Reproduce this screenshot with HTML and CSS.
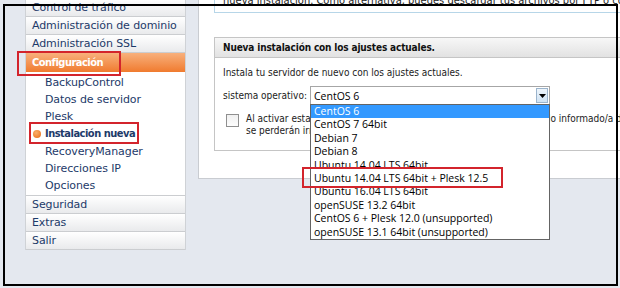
FILE: index.html
```html
<!DOCTYPE html>
<html lang="es">
<head>
<meta charset="utf-8">
<link rel="stylesheet" href="styles.css">
</head>
<body>
<div class="page">
  <nav class="sidebar">
    <div class="item">Control de tráfico</div>
    <div class="item">Administración de dominio</div>
    <div class="item">Administración SSL</div>
    <div class="item active">Configuración</div>
    <ul class="sub">
      <li>BackupControl</li>
      <li>Datos de servidor</li>
      <li>Plesk</li>
      <li class="current"><span class="bullet"></span>Instalación nueva</li>
      <li>RecoveryManager</li>
      <li>Direcciones IP</li>
      <li>Opciones</li>
    </ul>
    <div class="item">Seguridad</div>
    <div class="item">Extras</div>
    <div class="item">Salir</div>
  </nav>
  <main class="main">
    <div class="notice">nueva instalación. Como alternativa, puedes descargar tus archivos por FTP o copiarlos a otro servidor.</div>
    <section class="panel">
      <h2 class="panel-head">Nueva instalación con los ajustes actuales.</h2>
      <div class="panel-body">
        <p class="lead">Instala tu servidor de nuevo con los ajustes actuales.</p>
        <div class="row">
          <span class="label">sistema operativo:</span>
          <div class="select">
            <span class="value">CentOS 6</span>
            <span class="arrow"><svg width="7" height="4" viewBox="0 0 7 4"><path d="M0 0h7L3.5 4z" fill="#000"/></svg></span>
            <ul class="options">
              <li class="sel">CentOS 6</li>
              <li>CentOS 7 64bit</li>
              <li>Debian 7</li>
              <li>Debian 8</li>
              <li>Ubuntu 14.04 LTS 64bit</li>
              <li>Ubuntu 14.04 LTS 64bit + Plesk 12.5</li>
              <li>Ubuntu 16.04 LTS 64bit</li>
              <li>openSUSE 13.2 64bit</li>
              <li>CentOS 6 + Plesk 12.0 (unsupported)</li>
              <li>openSUSE 13.1 64bit (unsupported)</li>
            </ul>
          </div>
        </div>
        <div class="check">
          <span class="box"></span>
          <p>Al activar esta opción, confirmo que he leído, y entiendo que he sido informado/a de que todos los datos<br>se perderán irrevocablemente con la nueva instalación.</p>
        </div>
      </div>
    </section>
  </main>
</div>
<div class="frame"></div>
<div class="mark mark-config"></div>
<div class="mark mark-install"></div>
<div class="mark mark-ubuntu"></div>
</body>
</html>
```
FILE: styles.css
```css
* { box-sizing: border-box; }
html, body { margin: 0; padding: 0; }
body {
  width: 620px;
  height: 288px;
  overflow: hidden;
  background: #e4e8ef;
  font-family: "DejaVu Sans", Verdana, sans-serif;
  position: relative;
}
.page {
  display: flex;
  align-items: flex-start;
  width: 620px;
}
.sidebar {
  flex: none;
  width: 161px;
  margin-left: 25px;
  margin-top: -1px;
  border-left: 1px solid #cfd2d6;
  border-right: 1px solid #cfd2d6;
  font-size: 11px;
  letter-spacing: -0.1px;
  white-space: nowrap;
}
.item {
  height: 18px;
  line-height: 18px;
  padding-left: 6px;
  color: #1d3a69;
  background: linear-gradient(#ffffff, #e9eaec);
  border-bottom: 1px solid #cbcdd0;
}
.item.active {
  height: 19px;
  line-height: 19px;
  color: #fff;
  font-weight: bold;
  font-stretch: condensed;
  letter-spacing: -0.5px;
  border-bottom: 0;
  background: linear-gradient(#f8b07c, #f07b2f);
}
.sub {
  list-style: none;
  margin: 0;
  padding: 1.5px 0 0;
  background: #fff;
  border-bottom: 1px solid #cbcdd0;
}
.sub li {
  height: 17.3px;
  line-height: 17.3px;
  padding-left: 19px;
  color: #1d3a69;
  position: relative;
}
.sub li.current {
  font-weight: bold;
  font-stretch: condensed;
  letter-spacing: -0.5px;
}
.bullet {
  position: absolute;
  left: 7px;
  top: 5px;
  width: 8px;
  height: 8px;
  border-radius: 50%;
  background: radial-gradient(circle at 40% 35%, #fbb06b, #e86a12);
}
.main {
  flex: 1;
  min-width: 0;
  margin-left: 12px;
  height: 179px;
  background: #fff;
  border-left: 1px solid #c9ccd1;
  border-bottom: 1px solid #c9ccd1;
  padding-left: 15px;
  font-size: 10px;
  font-stretch: condensed;
  color: #222;
}
.notice {
  margin-top: -7px;
  height: 20px;
  padding: 1px 8px;
  width: 420px;
  border: 1px solid #b7d6e8;
  border-right: 0;
  border-top: 0;
  font-size: 11px;
  white-space: nowrap;
  background: #fff;
}
.panel {
  margin-top: 24px;
  width: 420px;
  border: 1px solid #c5c5c5;
  border-right: 0;
  height: 114px;
}
.panel-head {
  margin: 0;
  height: 20px;
  line-height: 19px;
  padding-left: 8px;
  font-size: 10px;
  font-weight: bold;
  letter-spacing: -0.15px;
  background: linear-gradient(#f7f7f7, #e2e2e2);
  border-bottom: 1px solid #c5c5c5;
  color: #111;
}
.panel-body {
  padding: 8px 0 0 8px;
}
.lead { margin: 0; height: 18px; line-height: 14px; }
.row {
  display: flex;
  align-items: center;
  margin-top: 2px;
}
.label { flex: none; width: 87px; white-space: nowrap; }
.select {
  position: relative;
  flex: none;
  width: 240px;
  height: 19px;
  border: 1px solid #a6a6a6;
  background: #fff;
  display: flex;
  align-items: center;
  font-family: "Open Sans", "Noto Sans", sans-serif;
  font-stretch: normal;
  font-size: 10.5px;
  color: #000;
  z-index: 2;
}
.value { flex: 1; padding-left: 3px; }
.arrow {
  width: 12px;
  height: 15px;
  margin-right: 1px;
  border: 1px solid #9bb4cc;
  background: linear-gradient(#eef5fb, #cfe2f3);
  display: flex;
  align-items: center;
  justify-content: center;
}
.options {
  position: absolute;
  left: -1px;
  top: 17px;
  width: 240px;
  margin: 0;
  padding: 0;
  list-style: none;
  background: #fff;
  border: 1px solid #646464;
}
.options li {
  height: 13.4px;
  line-height: 13px;
  padding-left: 3px;
  white-space: nowrap;
}
.options li.sel { background: #3399ff; color: #fff; }
.check {
  display: flex;
  align-items: flex-start;
  margin-top: 8px;
  margin-left: 3px;
}
.box {
  width: 13px;
  height: 13px;
  border: 1px solid #8f8f8f;
  background: linear-gradient(#f0f0f0, #fdfdfd);
  flex: none;
  margin-right: 7px;
  margin-top: 1px;
}
.check p { margin: 0; line-height: 12px; white-space: nowrap; }
.frame {
  position: absolute;
  left: 3px;
  top: 4px;
  width: 615px;
  height: 282px;
  border: 2px solid #000;
  pointer-events: none;
}
.mark {
  position: absolute;
  border: 2px solid #d3242c;
}
.mark-config { left: 17px; top: 51px; width: 104px; height: 25px; }
.mark-install { left: 29px; top: 122px; width: 110px; height: 22px; }
.mark-ubuntu { left: 302px; top: 167px; width: 201px; height: 21px; z-index: 3; }
```
